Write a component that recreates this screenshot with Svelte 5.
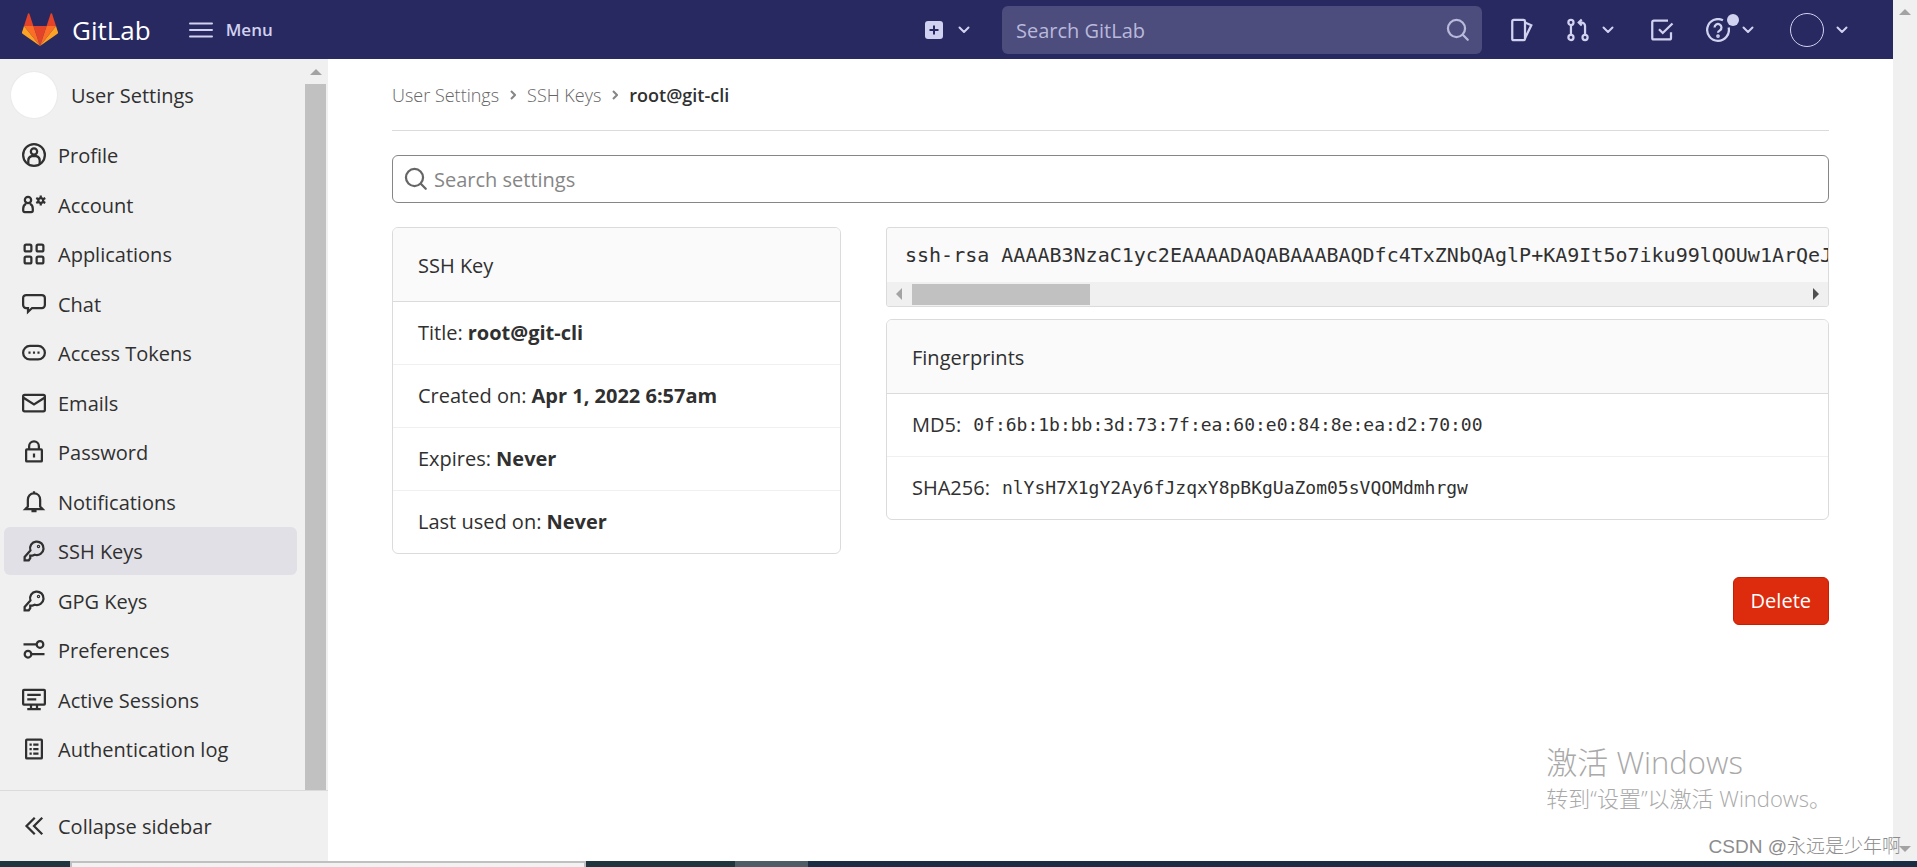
<script>
  const menuItems = [
    { name: 'Profile', icon: 'profile' },
    { name: 'Account', icon: 'account' },
    { name: 'Applications', icon: 'applications' },
    { name: 'Chat', icon: 'chat' },
    { name: 'Access Tokens', icon: 'token' },
    { name: 'Emails', icon: 'mail' },
    { name: 'Password', icon: 'lock' },
    { name: 'Notifications', icon: 'bell' },
    { name: 'SSH Keys', icon: 'key', active: true },
    { name: 'GPG Keys', icon: 'key' },
    { name: 'Preferences', icon: 'preferences' },
    { name: 'Active Sessions', icon: 'monitor' },
    { name: 'Authentication log', icon: 'log' }
  ];

  const details = [
    { label: 'Title:', value: 'root@git-cli' },
    { label: 'Created on:', value: 'Apr 1, 2022 6:57am' },
    { label: 'Expires:', value: 'Never' },
    { label: 'Last used on:', value: 'Never' }
  ];

  const fingerprints = [
    { label: 'MD5:', value: '0f:6b:1b:bb:3d:73:7f:ea:60:e0:84:8e:ea:d2:70:00' },
    { label: 'SHA256:', value: 'nlYsH7X1gY2Ay6fJzqxY8pBKgUaZom05sVQOMdmhrgw' }
  ];

  const publicKey = 'ssh-rsa AAAAB3NzaC1yc2EAAAADAQABAAABAQDfc4TxZNbQAglP+KA9It5o7iku99lQOUw1ArQeJ';

  let search = '';
  let settingsSearch = '';
</script>

<svelte:head>
  <title>root@git-cli · SSH Keys</title>
</svelte:head>

<div class="screen">
  <div class="browser">
    <div class="page">
      <header class="navbar">
        <a href="#home" class="brand">
          <svg width="36" height="33" viewBox="0 0 36 33">
            <path d="M18 33L24.600 13H11.400z" fill="#e24329" />
            <path d="M18 33L11.400 13H2z" fill="#fc6d26" />
            <path d="M2 13L0 19.200a1.400 1.400 0 0 0 .5 1.500L18 33z" fill="#fca326" />
            <path d="M2 13h9.400L7.300.6a.7.7 0 0 0-1.300 0z" fill="#e24329" />
            <path d="M18 33l6.600-20H34z" fill="#fc6d26" />
            <path d="M34 13l2 6.200a1.400 1.400 0 0 1-.5 1.500L18 33z" fill="#fca326" />
            <path d="M34 13h-9.400L28.700.6a.7.7 0 0 1 1.300 0z" fill="#e24329" />
          </svg>
          <span>GitLab</span>
        </a>
        <button class="menu-button">
          <svg width="24" height="24" viewBox="0 0 24 24" fill="none" stroke="currentColor" stroke-width="2" stroke-linecap="round">
            <path d="M1 5.500h22M1 12h22M1 18.500h22" />
          </svg>
          <span>Menu</span>
        </button>

        <div class="toolbar">
          <button class="dropdown new" aria-label="Create new">
            <svg width="18" height="18" viewBox="0 0 18 18">
              <rect width="18" height="18" rx="3" fill="currentColor" />
              <path d="M9 4.500v9M4.500 9h9" stroke="#292961" stroke-width="2" />
            </svg>
            {@render chevron()}
          </button>
          <div class="global-search">
            <input type="text" placeholder="Search GitLab" aria-label="Search GitLab" bind:value={search} />
            {@render searchIcon()}
          </div>
          <a href="#issues" aria-label="Issues">
            <svg class="icon" viewBox="0 0 16 16">
              <rect x="1.500" y="1.250" width="8.500" height="13.500" rx="1" />
              <path d="M10 3l4.200 1.800L10 13.500" />
            </svg>
          </a>
          <button class="dropdown" aria-label="Merge requests">
            <svg class="icon" viewBox="0 0 16 16">
              <circle cx="3.300" cy="3" r="1.700" />
              <circle cx="3.300" cy="13" r="1.700" />
              <circle cx="12.700" cy="13" r="1.700" />
              <path d="M3.300 4.700v6.600M12.700 11.300V5.300a2.300 2.300 0 0 0-2.300-2.300H8.500M10.500 1L8.500 3l2 2" />
            </svg>
            {@render chevron()}
          </button>
          <a href="#todos" aria-label="To-do list">
            <svg class="icon" viewBox="0 0 16 16">
              <path d="M12 1.750H2.500a1 1 0 0 0-1 1v10.500a1 1 0 0 0 1 1h10.500a1 1 0 0 0 1-1V9.500M6 7.500l2.500 2.500 6.500-6.300" />
            </svg>
          </a>
          <button class="dropdown help" aria-label="Help">
            <svg class="icon" viewBox="0 0 16 16">
              <path d="M11.300 1.500A7.250 7.250 0 1 0 15.100 6.400" />
              <path d="M5.700 6.300a2.300 2.300 0 1 1 3.600 1.900c-.8.5-1.300.8-1.300 1.600" />
              <circle cx="8" cy="12" r=".5" />
            </svg>
            <i class="dot"></i>
            {@render chevron()}
          </button>
          <button class="dropdown" aria-label="User menu">
            <span class="user-avatar"></span>
            {@render chevron()}
          </button>
        </div>
      </header>

      <div class="body">
        <aside class="sidebar">
          <div class="sidebar-scroll">
            <nav>
              <a href="#user" class="context">
                <span class="context-avatar"></span>
                <span class="label">User Settings</span>
              </a>
              <ul>
                {#each menuItems as item}
                  <li>
                    <a href="#{item.icon}" class:active={item.active}>
                      {@render menuIcon(item.icon)}
                      <span class="label">{item.name}</span>
                    </a>
                  </li>
                {/each}
              </ul>
            </nav>
            <div class="scrollbar side" aria-hidden="true">
              <svg width="12" height="6" viewBox="0 0 12 6"><path d="M0 6l6-6 6 6z" fill="#a3a3a3" /></svg>
              <div class="thumb"></div>
            </div>
          </div>
          <button class="collapse">
            <svg class="icon" viewBox="0 0 16 16">
              <path d="M8.500 2.500L3 8l5.500 5.500M13.500 2.500L8 8l5.500 5.500" />
            </svg>
            <span class="label">Collapse sidebar</span>
          </button>
        </aside>

        <main>
          <nav class="breadcrumbs" aria-label="Breadcrumbs">
            <a href="#user">User Settings</a>
            {@render separator()}
            <a href="#keys">SSH Keys</a>
            {@render separator()}
            <a href="#key" class="current">root@git-cli</a>
          </nav>

          <div class="settings-search">
            {@render searchIcon()}
            <input type="text" placeholder="Search settings" aria-label="Search settings" bind:value={settingsSearch} />
          </div>

          <div class="columns">
            <section class="card details">
              <div class="card-header">SSH Key</div>
              <ul>
                {#each details as row}
                  <li>{row.label} <strong>{row.value}</strong></li>
                {/each}
              </ul>
            </section>

            <div class="key-column">
              <div class="key-box">
                <pre>{publicKey}</pre>
                <div class="scrollbar horizontal" aria-hidden="true">
                  <svg width="6" height="12" viewBox="0 0 6 12"><path d="M6 0L0 6l6 6z" fill="#a3a3a3" /></svg>
                  <div class="track"><div class="thumb"></div></div>
                  <svg width="6" height="12" viewBox="0 0 6 12"><path d="M0 0l6 6-6 6z" fill="#505050" /></svg>
                </div>
              </div>
              <section class="card">
                <div class="card-header">Fingerprints</div>
                <ul>
                  {#each fingerprints as row}
                    <li><span>{row.label}</span><code>{row.value}</code></li>
                  {/each}
                </ul>
              </section>
              <button class="delete">Delete</button>
            </div>
          </div>
        </main>
      </div>
    </div>

    <div class="scrollbar window" aria-hidden="true">
      <svg width="12" height="6" viewBox="0 0 12 6"><path d="M0 6l6-6 6 6z" fill="#a3a3a3" /></svg>
      <svg width="12" height="6" viewBox="0 0 12 6"><path d="M0 0l6 6 6-6z" fill="#a3a3a3" /></svg>
    </div>
  </div>

  <div class="taskbar" aria-hidden="true">
    <div class="start"></div>
    <div class="task-search"></div>
    <div class="tasks"></div>
    <div class="task-active"></div>
  </div>

  <div class="activate">
    <div class="activate-title">激活 Windows</div>
    <div>转到“设置”以激活 Windows。</div>
  </div>
  <div class="credit">CSDN @永远是少年啊</div>
</div>

{#snippet chevron()}
  <svg class="chevron" width="12" height="8" viewBox="0 0 12 8"><path d="M1.500 1.500L6 6l4.500-4.500" /></svg>
{/snippet}

{#snippet separator()}
  <svg class="separator" width="6" height="10" viewBox="0 0 6 10"><path d="M1 1l4 4-4 4" /></svg>
{/snippet}

{#snippet searchIcon()}
  <svg class="icon" viewBox="0 0 16 16">
    <circle cx="7" cy="7" r="5.700" />
    <path d="M11.200 11.200l3.300 3.300" stroke-linecap="round" />
  </svg>
{/snippet}

{#snippet menuIcon(name)}
  <svg class="icon" viewBox="0 0 16 16">
    {#if name === 'profile'}
      <circle cx="8" cy="8" r="7.250" />
      <circle cx="8" cy="5.700" r="2.100" />
      <path d="M4.200 14v-2.300a3 3 0 0 1 2.200-3h3.200a3 3 0 0 1 2.200 3V14" />
    {:else if name === 'account'}
      <circle cx="4" cy="4.600" r="2.100" />
      <path d="M2.700 7.200C1.500 7.800.8 9 .8 10.500v1.200a1 1 0 0 0 1 1h4.400a1 1 0 0 0 1-1v-1.200c0-1.500-.7-2.700-1.900-3.300" />
      <circle cx="12.500" cy="5" r="1.600" />
      <path d="M12.500 1.600v1.500M12.500 6.900v1.500M9.500 3.300l1.400.8M14.100 5.900l1.400.8M9.500 6.700l1.400-.8M14.100 4.100l1.400-.8" />
    {:else if name === 'applications'}
      <rect x="1.750" y="1.750" width="4.500" height="4.500" rx="1" />
      <rect x="9.750" y="1.750" width="4.500" height="4.500" rx="1" />
      <rect x="1.750" y="9.750" width="4.500" height="4.500" rx="1" />
      <rect x="9.750" y="9.750" width="4.500" height="4.500" rx="1" />
    {:else if name === 'chat'}
      <path d="M2.750 2h10.500a2 2 0 0 1 2 2v4.700a2 2 0 0 1-2 2H6.700L4 13.300v-2.600H2.750a2 2 0 0 1-2-2V4a2 2 0 0 1 2-2z" />
    {:else if name === 'token'}
      <rect x=".75" y="3.300" width="14.500" height="9" rx="4.500" />
      <path d="M4.300 7.800h1.400M7.300 7.800h1.400M10.300 7.800h1.400" />
    {:else if name === 'mail'}
      <rect x=".75" y="2.500" width="14.500" height="11" rx="1" />
      <path d="M1 4.500l7 4.500 7-4.500" />
    {:else if name === 'lock'}
      <rect x="2.750" y="6.250" width="10.500" height="8" rx=".5" />
      <path d="M4.750 6V4.200a3.250 3.250 0 0 1 6.500 0V6M8 9v2.700" />
    {:else if name === 'bell'}
      <path d="M8 .8v1.400M3.900 11V6.500C3.900 4 5.500 2.300 8 2.300S12.100 4 12.100 6.500V11l1.700 1.800H2.200zM6.300 14h3.400" />
    {:else if name === 'key'}
      <path d="M5.600 7.600a4.500 4.500 0 1 1 3 2.900L7 11H5.500v1.800L4.500 14.250H1.750V12z" />
      <circle cx="11" cy="5" r=".4" />
    {:else if name === 'preferences'}
      <circle cx="12" cy="4.300" r="2.200" />
      <circle cx="4" cy="10.800" r="2.200" />
      <path d="M1 4.300h8.800M6.200 10.800H15" />
    {:else if name === 'monitor'}
      <rect x=".75" y="1.250" width="14.500" height="9.800" rx=".5" />
      <path d="M3.500 4.500h9M3.500 7.500h6M6 11v2.500M10 11v2.500M3.500 14h9" />
    {:else}
      <rect x="2.750" y="1.750" width="10.500" height="12.500" rx=".5" />
      <path d="M5 5h1.500M7.500 5H11M5 8h1.500M7.500 8H11M5 11h1.500M7.500 11H11" />
    {/if}
  </svg>
{/snippet}

<style>
  :global(body) {
    font-family: 'Open Sans', 'Noto Sans', 'Noto Sans CJK SC', sans-serif;
    font-size: 20px;
    line-height: 28px;
    color: #303030;
    background: #fff;
  }

  .screen {
    position: relative;
    display: flex;
    flex-direction: column;
    height: 100vh;
    overflow: hidden;
  }

  .browser {
    display: flex;
    flex: 1;
    min-height: 0;
  }

  .page {
    display: flex;
    flex-direction: column;
    flex: 1;
    min-width: 0;
  }

  a {
    color: inherit;
    text-decoration: none;
  }

  button {
    font: inherit;
    color: inherit;
    background: none;
    border: none;
    padding: 0;
    cursor: pointer;
  }

  input {
    font: inherit;
    color: inherit;
    background: none;
    border: none;
    outline: none;
    padding: 2px 0 0;
    flex: 1;
    min-width: 0;
  }

  ul {
    list-style: none;
    margin: 0;
    padding: 0;
  }

  svg {
    display: block;
    flex: none;
  }

  .icon {
    width: 24px;
    height: 24px;
    fill: none;
    stroke: currentColor;
    stroke-width: 1.5;
  }

  .chevron {
    fill: none;
    stroke: currentColor;
    stroke-width: 2;
    stroke-linecap: round;
    stroke-linejoin: round;
  }

  /* Top bar */
  .navbar {
    display: flex;
    align-items: center;
    height: 59px;
    padding: 0 41px 0 22px;
    background: #292961;
    color: #d1d1f0;
  }

  .brand {
    display: flex;
    align-items: center;
    gap: 14px;
    font-size: 26px;
    color: #fff;
  }

  .menu-button {
    display: flex;
    align-items: center;
    gap: 13px;
    margin-left: 38px;
    font-size: 17px;
    font-weight: 600;
  }

  .toolbar {
    display: flex;
    align-items: center;
    gap: 32px;
    margin-left: auto;
  }

  .dropdown {
    position: relative;
    display: flex;
    align-items: center;
    gap: 12px;
    margin-right: 4px;
  }

  .new {
    gap: 15px;
    margin-right: 0;
  }

  .global-search {
    display: flex;
    align-items: center;
    width: 480px;
    height: 48px;
    box-sizing: border-box;
    padding: 0 12px 0 14px;
    margin-right: -4px;
    border-radius: 6px;
    background: #4c4c7d;
    color: #b9b9db;
  }

  .global-search input::placeholder {
    color: #b9b9db;
    opacity: 1;
  }

  .dot {
    position: absolute;
    left: 21px;
    top: -4px;
    width: 12px;
    height: 12px;
    border-radius: 50%;
    background: #d1d1f0;
  }

  .user-avatar {
    width: 32px;
    height: 32px;
    border: 1px solid #d1d1f0;
    border-radius: 50%;
  }

  /* Sidebar */
  .body {
    display: flex;
    flex: 1;
    min-height: 0;
  }

  .sidebar {
    display: flex;
    flex-direction: column;
    flex: none;
    width: 328px;
    background: #f0f0f0;
  }

  .sidebar-scroll {
    display: flex;
    flex: 1;
    min-height: 0;
  }

  .sidebar nav {
    display: flex;
    flex-direction: column;
    flex: 1;
    padding: 0 6px 17px 4px;
  }

  .label {
    padding-top: 2px;
  }

  .context {
    display: flex;
    align-items: center;
    gap: 14px;
    height: 72px;
    padding-left: 7px;
  }

  .context-avatar {
    width: 46px;
    height: 46px;
    border-radius: 50%;
    background: #fff;
    box-shadow: 0 0 0 1px #eaeaea;
  }

  .sidebar ul {
    display: flex;
    flex-direction: column;
    justify-content: space-between;
    flex: 1;
  }

  .sidebar li a {
    display: flex;
    align-items: center;
    gap: 12px;
    height: 48px;
    padding-left: 18px;
    border-radius: 6px;
  }

  .sidebar li a.active {
    background: #e1e0e6;
  }

  .collapse {
    display: flex;
    align-items: center;
    gap: 12px;
    height: 71px;
    padding-left: 22px;
    border-top: 1px solid #dbdbdb;
  }

  /* Scrollbars */
  .scrollbar {
    display: flex;
    flex: none;
    align-items: center;
    background: #f0f0f0;
  }

  .scrollbar .thumb {
    background: #c1c1c1;
  }

  .side {
    flex-direction: column;
    gap: 9px;
    width: 25px;
    padding-top: 10px;
    box-sizing: border-box;
  }

  .side .thumb {
    flex: 1;
    width: 21px;
  }

  .horizontal {
    gap: 10px;
    height: 24px;
    padding: 0 9px;
  }

  .track {
    flex: 1;
  }

  .track .thumb {
    width: 20%;
    height: 21px;
  }

  .window {
    flex-direction: column;
    justify-content: space-between;
    width: 24px;
    padding: 9px 0;
  }

  /* Content */
  main {
    flex: 1;
    min-width: 0;
    padding: 0 64px;
  }

  .breadcrumbs {
    display: flex;
    align-items: center;
    gap: 11px;
    height: 71px;
    border-bottom: 1px solid #dbdbdb;
    font-size: 18px;
    color: #666;
  }

  .breadcrumbs a {
    font-weight: 300;
  }

  .breadcrumbs .current {
    font-weight: 600;
    color: #303030;
  }

  .separator {
    fill: none;
    stroke: #868686;
    stroke-width: 2;
  }

  .settings-search {
    display: flex;
    align-items: center;
    gap: 6px;
    height: 46px;
    margin: 24px 0;
    padding: 0 12px 0 11px;
    border: 1px solid #868686;
    border-radius: 6px;
    color: #666;
  }

  .settings-search input::placeholder {
    color: #868686;
    opacity: 1;
  }

  .columns {
    display: grid;
    grid-template-columns: repeat(12, 1fr);
    align-items: start;
    gap: 45px;
  }

  .details {
    grid-column: span 4;
  }

  .key-column {
    grid-column: span 8;
    display: flex;
    flex-direction: column;
    min-width: 0;
  }

  .card {
    border: 1px solid #dbdbdb;
    border-radius: 6px;
    overflow: hidden;
  }

  .card-header {
    padding: 24px 25px 21px;
    background: #fafafa;
    border-bottom: 1px solid #dbdbdb;
  }

  .card li {
    display: flex;
    align-items: center;
    gap: 5px;
    height: 62px;
    padding: 0 25px;
    border-bottom: 1px solid #f0f0f0;
  }

  .card li:last-child {
    border-bottom: none;
  }

  .card code {
    margin-left: 7px;
    font-family: 'DejaVu Sans Mono', monospace;
    font-size: 18px;
  }

  .key-box {
    margin-bottom: 12px;
    border: 1px solid #dbdbdb;
    border-radius: 3px;
    background: #fafafa;
    overflow: hidden;
  }

  pre {
    margin: 0;
    padding: 13px 0 13px 18px;
    font-family: 'DejaVu Sans Mono', monospace;
    font-size: 20px;
    overflow-x: auto;
    scrollbar-width: none;
  }

  .delete {
    align-self: flex-end;
    height: 48px;
    margin-top: 57px;
    padding: 0 17px;
    border: 1px solid #c91c00;
    border-radius: 6px;
    background: #dd2b0e;
    color: #fff;
  }

  /* Desktop chrome */
  .taskbar {
    display: flex;
    flex: none;
    height: 6px;
    background: #1b2d42;
  }

  .start {
    width: 70px;
    background: #20363f;
  }

  .task-search {
    width: 512px;
    border: 2px solid #c0c0c0;
    border-bottom: none;
    background: #f2f2f2;
  }

  .tasks {
    width: 149px;
    background: #20363f;
  }

  .task-active {
    width: 73px;
    background: #4e5d66;
  }

  .activate {
    position: absolute;
    right: 86px;
    bottom: 53px;
    font-family: 'Open Sans', 'Noto Sans CJK SC', sans-serif;
    font-size: 22px;
    font-weight: 300;
    line-height: 32px;
    color: #a9a9a9;
  }

  .activate-title {
    font-size: 31px;
    line-height: 40px;
  }

  .credit {
    position: absolute;
    right: 16px;
    bottom: 6px;
    font-family: 'Liberation Sans', 'Noto Sans CJK SC', sans-serif;
    font-size: 19px;
    font-weight: 300;
    color: #8c8c8c;
  }
</style>
